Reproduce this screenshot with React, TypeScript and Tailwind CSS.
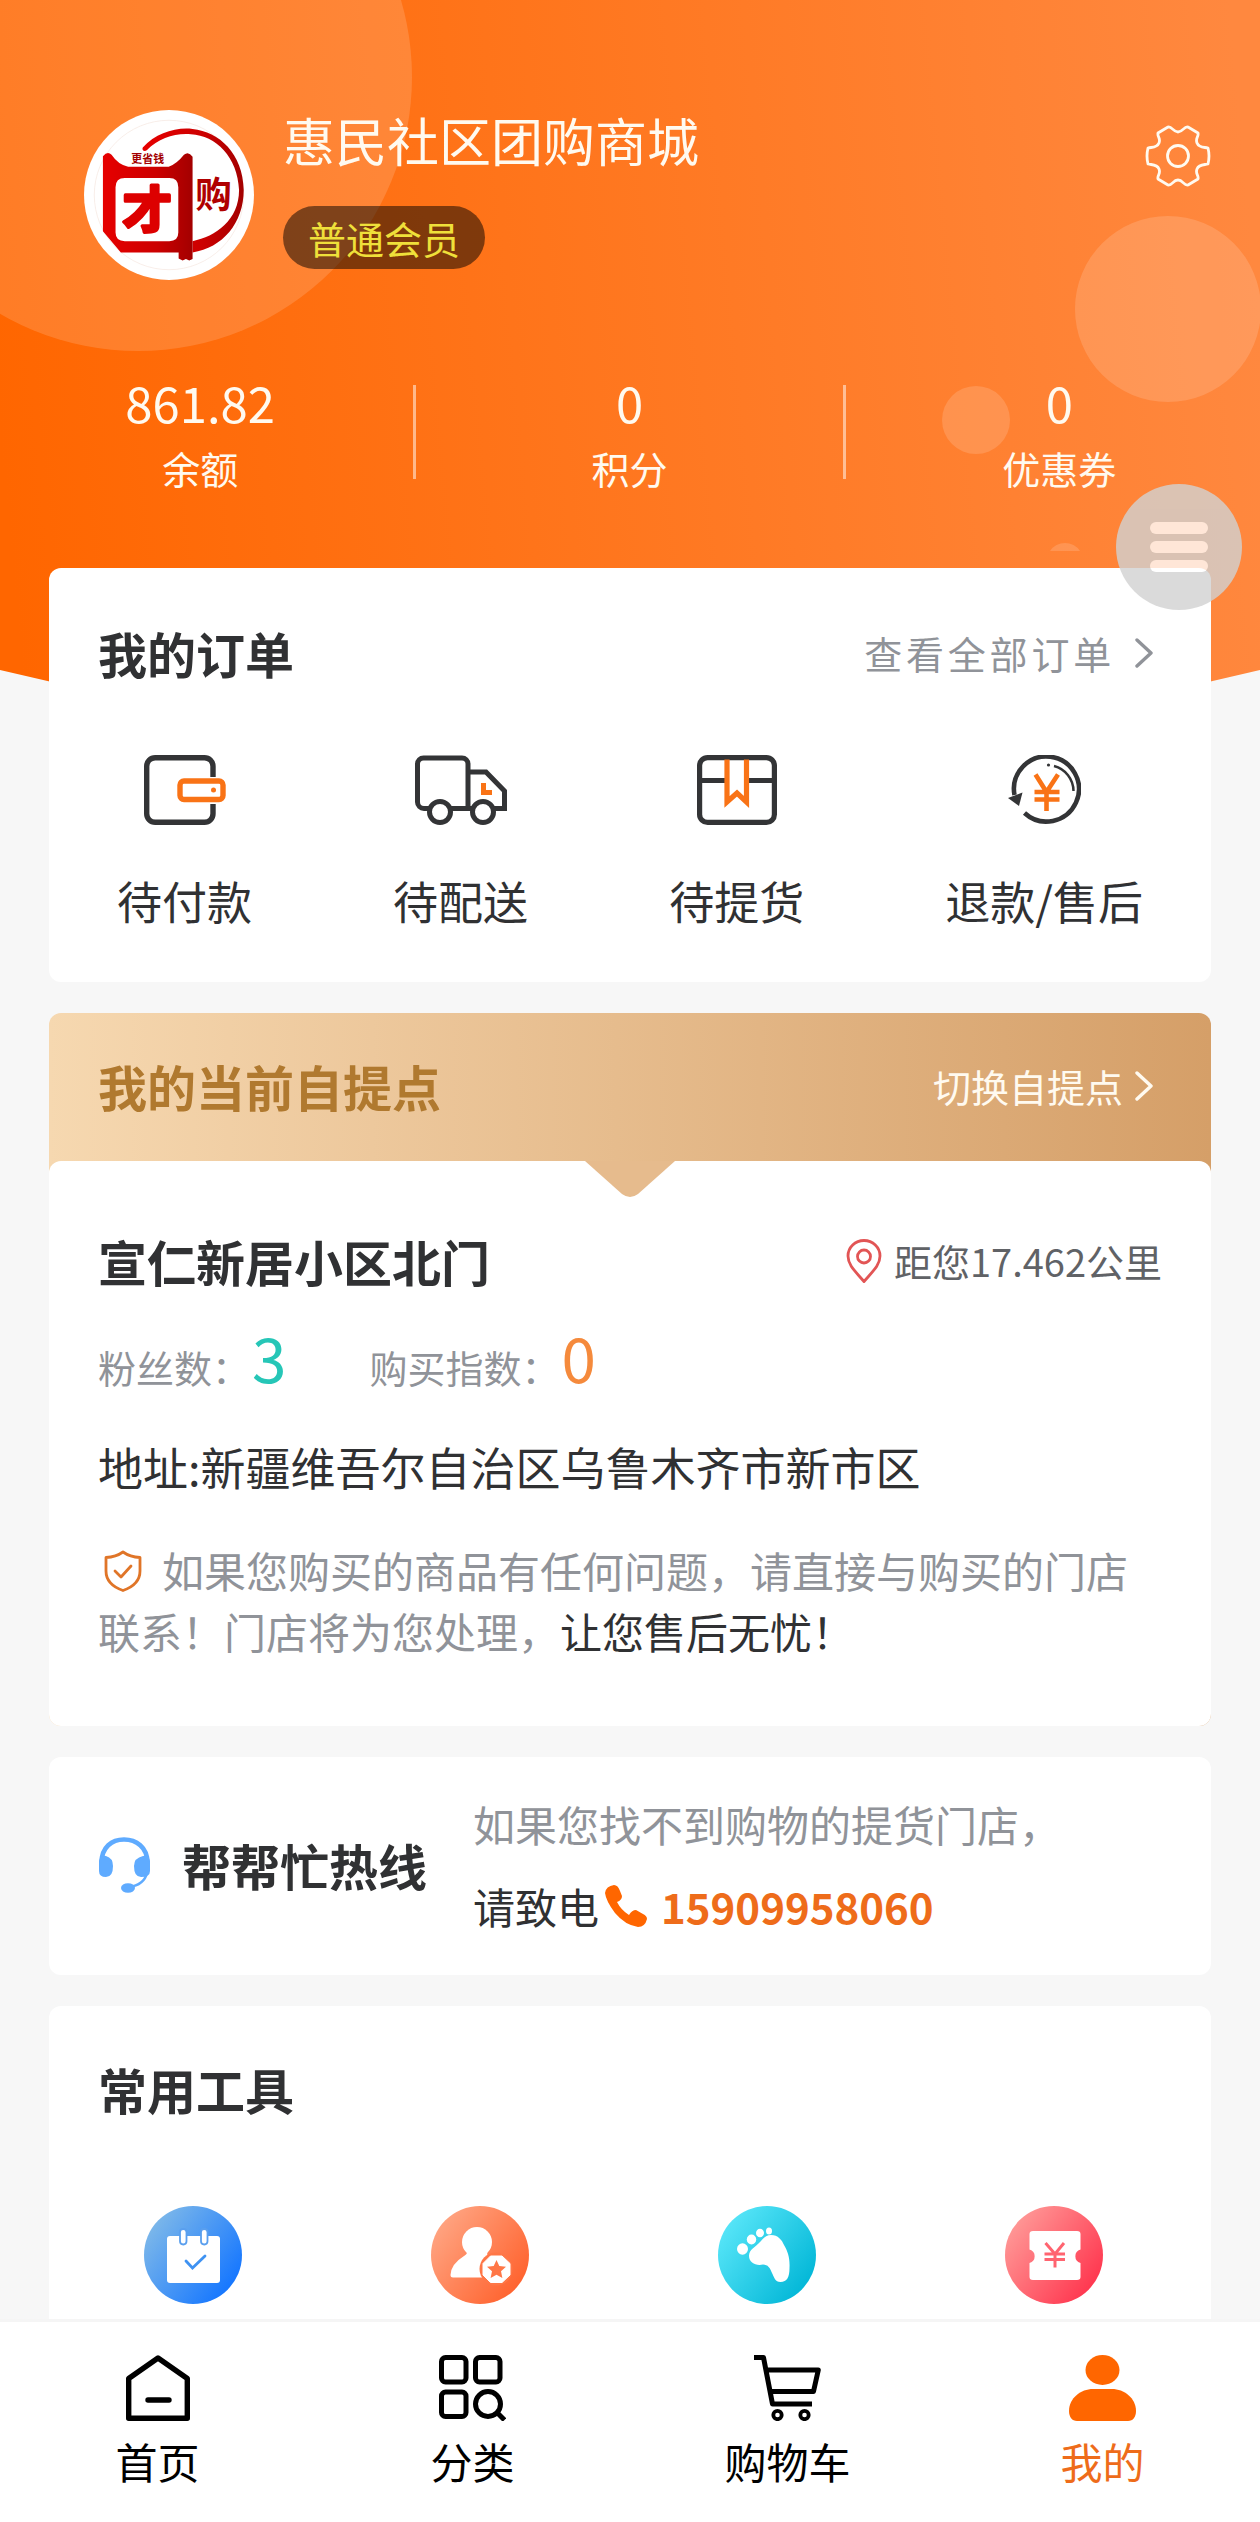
import type { ReactNode } from 'react';

const stats = [
  { value: '861.82', label: '余额' },
  { value: '0', label: '积分' },
  { value: '0', label: '优惠券' },
];

function HeaderBackground() {
  return (
    <svg
      className="absolute inset-x-0 top-0 w-full"
      viewBox="0 0 1260 750"
      aria-hidden="true"
    >
      <defs>
        <linearGradient id="headerFill" gradientUnits="userSpaceOnUse" x1="0" y1="440" x2="1260" y2="320">
          <stop offset="0" stopColor="#ff6600" />
          <stop offset="1" stopColor="#ff883f" />
        </linearGradient>
      </defs>
      <path d="M0 0H1260V670Q630 824 0 670Z" fill="url(#headerFill)" />
      <g fill="#fff" fillOpacity="0.15">
        <circle cx="138" cy="77" r="274" />
        <circle cx="1168" cy="309" r="93" />
        <circle cx="976" cy="420" r="34" />
        <path d="M1050 551a18 18 0 0 1 30 0z" />
      </g>
    </svg>
  );
}

function ShopLogo() {
  return (
    <svg className="size-[170px] shrink-0" viewBox="73 59 512 512" role="img" aria-label="团购">
      <defs>
        <linearGradient id="logoRed" x1="0" x2="1">
          <stop offset="0" stopColor="#e60000" />
          <stop offset="0.6" stopColor="#cc0000" />
          <stop offset="1" stopColor="#a30000" />
        </linearGradient>
      </defs>
      <circle cx="329" cy="315" r="256" fill="#fff" />
      <circle cx="329" cy="315" r="225" fill="none" stroke="#f5e6de" strokeWidth="2" />
      <path
        d="M250 172C290 128 350 110 400 116C480 124 552 190 554 300C554 400 490 474 400 488V454C470 440 540 390 540 300C536 200 470 136 395 132C345 128 300 144 262 180C255 186 246 180 250 172Z"
        fill="url(#logoRed)"
      />
      <path
        fillRule="evenodd"
        d="M130 198Q144 182 156 194Q176 224 206 230H328Q352 222 374 194Q388 182 400 200V508L390 512L380 508L370 512L358 506V488H184L130 424ZM196 264Q168 264 168 292V428Q168 454 196 454H330Q357 454 357 428V292Q357 264 330 264Z"
        fill="url(#logoRed)"
      />
      <g fontFamily="'Noto Sans CJK SC', sans-serif" fontWeight="700" textAnchor="middle">
        <text x="263" y="415" fontSize="150" fill="#dd0000" stroke="#dd0000" strokeWidth="10" strokeLinejoin="round">才</text>
        <text x="463" y="354" fontSize="110" fill="#b00000">购</text>
        <text x="265" y="220" fontSize="33" fill="#a30000">更省钱</text>
      </g>
    </svg>
  );
}

function GearIcon() {
  return (
    <svg className="h-[64px] w-[66px]" viewBox="-33 -32 66 64" fill="none" stroke="#fffaf0" strokeWidth="2.8" strokeLinejoin="round">
      <path d="M-10-29C-6-30-5-24 0-24S6-30 10-29L20-23C21-19 17-18 19-13C21-8 26-9 30-8Q32 0 30 8C26 9 21 8 19 13C17 18 21 19 20 23L10 29C6 30 5 24 0 24S-6 30-10 29L-20 23C-21 19-17 18-19 13C-21 8-26 9-30 8Q-32 0-30-8C-26-9-21-8-19-13C-17-18-21-19-20-23Z" />
      <circle r="10.5" />
    </svg>
  );
}

function Chevron({ className }: { className: string }) {
  return (
    <svg className={className} viewBox="0 0 18 30" fill="none" stroke="currentColor" strokeWidth="3.4" strokeLinecap="round" strokeLinejoin="round" aria-hidden="true">
      <path d="M2 2L16 15L2 28" />
    </svg>
  );
}

const orders: { label: string; icon: ReactNode }[] = [
  {
    label: '待付款',
    icon: (
      <svg className="h-[70px] w-[82px]" viewBox="0 0 82 70" fill="none" stroke="#333436" strokeWidth="5.4">
        <path d="M69 22V11.2a8.500 8.500 0 0 0-8.500-8.500H11.200A8.500 8.500 0 0 0 2.700 11.200v47.600a8.500 8.500 0 0 0 8.500 8.500h49.300a8.500 8.500 0 0 0 8.500-8.500V49" />
        <rect x="36" y="26" width="43" height="18.500" rx="4" stroke="#f97316" />
        <circle cx="69.500" cy="35" r="2.500" fill="#f97316" stroke="none" />
      </svg>
    ),
  },
  {
    label: '待配送',
    icon: (
      <svg className="h-[70px] w-[92px]" viewBox="0 0 92 70" fill="none" stroke="#333436" strokeWidth="5">
        <path d="M14.500 53.500H9A6.500 6.500 0 0 1 2.500 47V9A6 6 0 0 1 8.500 3H47a6 6 0 0 1 6 6v44.500M35.500 53.500H57.500M53 17H71L89.500 36V53.500H78.500" />
        <circle cx="25" cy="57" r="10.500" />
        <circle cx="68" cy="57" r="10.500" />
        <path d="M68.500 28V37.500H77" stroke="#f97316" />
      </svg>
    ),
  },
  {
    label: '待提货',
    icon: (
      <svg className="h-[70px] w-[80px]" viewBox="0 0 80 70" fill="none" stroke="#333436" strokeWidth="5.200">
        <rect x="2.600" y="2.600" width="74.800" height="64.800" rx="8" />
        <path d="M4 25.500H29M50 25.500H76" />
        <path d="M30 4.500V47L40 38L49.500 47V4.500" stroke="#f97316" />
      </svg>
    ),
  },
  {
    label: '退款/售后',
    icon: (
      <svg className="h-[70px] w-[73px]" viewBox="0 0 73 70" fill="none" stroke="#333436" strokeWidth="4.600">
        <path d="M16.500 58A32.500 32.500 0 1 0 6.500 40" />
        <path d="M0 43L14.500 37.500L11 51Z" fill="#333436" stroke="none" />
        <path d="M46 11A26 26 0 0 1 65.500 36" strokeWidth="2.500" />
        <circle cx="40.500" cy="10" r="1.600" fill="#333436" stroke="none" />
        <path d="M27.500 19.500L38.500 37L50 19.500M38.500 37V56M26.500 37H51.500M26.500 44.500H51.500" stroke="#f97316" />
      </svg>
    ),
  },
];

const tools: { label: string; from: string; to: string; art: ReactNode }[] = [
  {
    label: '签到',
    from: '#7ab6ea',
    to: '#1677ff',
    art: (
      <>
        <rect x="23" y="30" width="53" height="47" rx="3" fill="#fff" />
        <g fill="#fff" stroke="#5a9fee" strokeWidth="1.800">
          <rect x="36" y="23" width="6.500" height="15.500" rx="3.200" />
          <rect x="57" y="23" width="6.500" height="15.500" rx="3.200" />
        </g>
        <path d="M42 55L48.500 62L61 50" fill="none" stroke="#3f92f2" strokeWidth="2.800" strokeLinecap="round" />
      </>
    ),
  },
  {
    label: '会员',
    from: '#ffa27f',
    to: '#ff6430',
    art: (
      <>
        <circle cx="46" cy="36" r="15" fill="#fff" />
        <path d="M35 44Q38 47 33 50Q20 58 19.500 69Q19.500 71.500 22 71.500H60V52Q54 49 57 44Z" fill="#fff" />
        <circle cx="65" cy="63" r="16.500" fill="#ff7747" />
        <path d="M59.500 50H71L79 57.500V69L71 76.500H59.500L52 69V57.500Z" fill="#fff" stroke="#fff" strokeLinejoin="round" />
        <path d="M65.500 54L68.300 60L75 60.800L70 65.300L71.400 72L65.500 68.700L59.600 72L61 65.300L56 60.800L62.700 60Z" fill="#ff7747" />
      </>
    ),
  },
  {
    label: '足迹',
    from: '#55e4f7',
    to: '#04b8d8',
    art: (
      <g fill="#fff">
        <ellipse cx="24.500" cy="43" rx="5.500" ry="5.800" />
        <ellipse cx="33.500" cy="33.500" rx="4.700" ry="5" />
        <ellipse cx="42" cy="27" rx="4" ry="4.300" />
        <ellipse cx="51" cy="25" rx="3" ry="3.500" />
        <path d="M53 29C60 29 64 34 66 39C70 46 72 52 71.500 62C71.500 71 69 76 62.500 76C57 76 56 71 54 67C52 62 50 58.500 45 58.500C38 60 31 57 31 50C31 43 37 42 43 35C46 31 49 29 53 29Z" />
      </g>
    ),
  },
  {
    label: '优惠券',
    from: '#ff9594',
    to: '#ff3850',
    art: (
      <>
        <path d="M28 25H72Q75.500 25 75.500 28V43.500A7 7 0 0 0 75.500 57V71Q75.500 74 72 74H28Q24.500 74 24.500 71V57A7 7 0 0 0 24.500 43.500V28Q24.500 25 28 25Z" fill="#fff" />
        <path d="M40.500 37L50 48L59 37M50 48V61.500M39.500 48H60M39.500 53.500H60" fill="none" stroke="#ff6470" strokeWidth="3" />
      </>
    ),
  },
];

const tabs: { label: string; active?: boolean; icon: ReactNode }[] = [
  {
    label: '首页',
    icon: (
      <svg className="h-[66px] w-[64px]" viewBox="0 0 64 66" fill="none" stroke="#000" strokeWidth="5.4" strokeLinejoin="round">
        <path d="M32 3L61.300 23.500V63.200H2.700V23.500Z" />
        <path d="M22 45H43" strokeLinecap="round" />
      </svg>
    ),
  },
  {
    label: '分类',
    icon: (
      <svg className="h-[66px] w-[67px]" viewBox="0 0 67 66" fill="none" stroke="#000" strokeWidth="5">
        <rect x="2.500" y="2.500" width="24.500" height="24.500" rx="4" />
        <rect x="36.500" y="2.500" width="24.500" height="24.500" rx="4" />
        <rect x="2.500" y="37" width="24.500" height="24.500" rx="4" />
        <circle cx="49" cy="49" r="12.500" />
        <path d="M58 57.500L65.500 65" />
      </svg>
    ),
  },
  {
    label: '购物车',
    icon: (
      <svg className="h-[66px] w-[67px]" viewBox="0 0 67 66" fill="none" stroke="#000" strokeWidth="5" strokeLinejoin="round">
        <path d="M0 2.500H9.500L18.500 49H58M13 15H64.300L59.500 36.500H17" />
        <circle cx="23.500" cy="60" r="4.200" strokeWidth="3.800" />
        <circle cx="50.500" cy="60" r="4.200" strokeWidth="3.800" />
      </svg>
    ),
  },
  {
    label: '我的',
    active: true,
    icon: (
      <svg className="h-[66px] w-[67px]" viewBox="0 0 67 66" fill="#ff6600">
        <ellipse cx="33.500" cy="15" rx="17" ry="15" />
        <path d="M0 56C0 43 12 34 24 34H43C55 34 67 43 67 56C67 62 64 66 59 66H8C3 66 0 62 0 56Z" />
      </svg>
    ),
  },
];

function OrdersCard() {
  return (
    <section className="rounded-xl bg-white pt-[57px] pb-[53px]">
      <div className="flex items-center justify-between pr-[58px] pl-[49px]">
        <h2 className="text-[49px] leading-[56px] font-bold">我的订单</h2>
        <a href="#orders" className="flex items-center gap-5 text-[38px] leading-[56px] tracking-widest text-[#909399]">
          查看全部订单
          <Chevron className="h-[30px] w-[18px]" />
        </a>
      </div>
      <div className="mt-[74px] flex justify-between px-[68px]">
        {orders.map((order) => (
          <a key={order.label} href="#orders" className="flex flex-col items-center gap-12 text-[45px] leading-[56px]">
            {order.icon}
            {order.label}
          </a>
        ))}
      </div>
    </section>
  );
}

function PickupCard() {
  return (
    <section className="rounded-xl bg-linear-to-r from-[#f6d8b0] to-[#d59f68]">
      <div className="flex items-center justify-between pt-[45px] pr-[58px] pb-[47px] pl-[49px]">
        <h2 className="text-[49px] leading-[56px] font-bold text-[#b0792f]">我的当前自提点</h2>
        <a href="#pickup" className="flex items-center gap-3 text-[38px] leading-[56px] text-[#fffaf0]">
          切换自提点
          <Chevron className="h-[30px] w-[18px]" />
        </a>
      </div>
      <div className="relative rounded-xl bg-white px-[49px] pt-[72px] pb-[65px]">
        <svg className="absolute top-0 left-1/2 h-[36px] w-[90px] -translate-x-1/2" viewBox="0 0 90 36" fill="#e6bb8d" aria-hidden="true">
          <path d="M0 0H90L53 33Q45 39 37 33Z" />
        </svg>
        <div className="flex items-center justify-between">
          <h3 className="text-[49px] leading-[56px] font-bold">宣仁新居小区北门</h3>
          <p className="flex items-center gap-3 text-[38px] leading-[56px] text-[#606266]">
            <svg className="h-[44px] w-[36px]" viewBox="0 0 36 44" fill="none" stroke="#e25555" strokeWidth="2.800" aria-hidden="true">
              <path d="M18 42.500C9 32 2 26 2 17A16 15.500 0 0 1 34 17C34 26 27 32 18 42.500Z" />
              <circle cx="18" cy="17.500" r="6.500" />
            </svg>
            距您17.462公里
          </p>
        </div>
        <dl className="mt-[35px] flex gap-[83px] text-[38px] text-[#909399]">
          <div className="flex items-baseline">
            <dt className="leading-[40px]">粉丝数：</dt>
            <dd className="ml-0.5 text-[62px] leading-[64px] text-[#26c6b7]">3</dd>
          </div>
          <div className="flex items-baseline">
            <dt className="leading-[40px]">购买指数：</dt>
            <dd className="ml-0.5 text-[62px] leading-[64px] text-[#f58a3c]">0</dd>
          </div>
        </dl>
        <p className="mt-[51px] text-[45px] leading-[56px]">地址:新疆维吾尔自治区乌鲁木齐市新市区</p>
        <p className="mt-11 text-[42px] leading-[61px] text-[#909399]">
          <svg className="mr-5 ml-1.5 inline-block h-[42px] w-[38px] align-[-4px]" viewBox="0 0 38 42" fill="none" stroke="#e07528" strokeWidth="2.800" strokeLinejoin="round" aria-hidden="true">
            <path d="M19 2Q26 7 36 7.500V21C36 31 29 37 19 40.500C9 37 2 31 2 21V7.500Q12 7 19 2Z" />
            <path d="M11 21L17 27L27 16" strokeLinecap="round" />
          </svg>
          如果您购买的商品有任何问题，请直接与购买的门店联系！门店将为您处理，
          <span className="text-[#303133]">让您售后无忧！</span>
        </p>
      </div>
    </section>
  );
}

function HotlineCard() {
  return (
    <section className="flex items-center rounded-xl bg-white px-[49px] pt-[37px] pb-[39px]">
      <svg className="h-[56px] w-[54px] shrink-0" viewBox="0 0 54 56" fill="#5fabff" aria-hidden="true">
        <path d="M3.500 26C3.500 10 14 2.500 26 2.500S49.500 10 49.500 26" fill="none" stroke="#5fabff" strokeWidth="4.600" />
        <path d="M1 24Q2 18 8 19Q15 21 15 29Q15 40 8 40Q1 40 1 34ZM52 24Q51 18 45 19Q36 21 36 29Q36 40 43 40Q52 40 52 34Z" />
        <path d="M49 36Q46 48 31 50" fill="none" stroke="#5fabff" strokeWidth="2.600" />
        <ellipse cx="30" cy="51" rx="7" ry="4.800" />
      </svg>
      <h2 className="ml-[30px] shrink-0 text-[49px] leading-[56px] font-bold">帮帮忙热线</h2>
      <div className="ml-[46px] flex flex-col gap-[22px] text-[42px] leading-[60px]">
        <p className="text-[#909399]">如果您找不到购物的提货门店，</p>
        <p className="flex items-center">
          请致电
          <svg className="mr-[14px] ml-1.5 size-[42px]" viewBox="0 0 42 42" fill="#ff6600" aria-hidden="true">
            <path d="M9 0Q13 0 15 6L17 11Q17 15 12 17Q16 25 24 30Q27 25 31 25L38 29Q42 31 42 34Q40 42 33 42Q20 40 10 28Q1 16 0 8Q1 1 9 0Z" />
          </svg>
          <a href="tel:15909958060" className="font-bold text-[#ee6c1a]">15909958060</a>
        </p>
      </div>
    </section>
  );
}

function ToolsCard() {
  return (
    <section className="flex-1 rounded-t-xl bg-white pt-[55px] pb-[14px]">
      <h2 className="pl-[49px] text-[49px] leading-[56px] font-bold">常用工具</h2>
      <div className="mt-[89px] grid grid-cols-4 justify-items-center pr-3.5">
        {tools.map((tool, i) => (
          <a key={tool.label} href="#tools" aria-label={tool.label}>
            <svg className="size-[98px]" viewBox="0 0 98 98">
              <defs>
                <linearGradient id={`tool${i}`} x1="0.1" y1="0.2" x2="0.9" y2="0.8">
                  <stop offset="0" stopColor={tool.from} />
                  <stop offset="1" stopColor={tool.to} />
                </linearGradient>
              </defs>
              <circle cx="49" cy="49" r="49" fill={`url(#tool${i})`} />
              {tool.art}
            </svg>
          </a>
        ))}
      </div>
    </section>
  );
}

export default function App() {
  return (
    <div className="relative flex min-h-screen flex-col bg-[#f7f7f7] font-['Noto_Sans_CJK_SC',sans-serif] text-[#303133]">
      <HeaderBackground />

      <header className="relative overflow-hidden pt-[110px] text-[#fffaf0]">
        <div className="flex items-start pr-[49px] pl-[84px]">
          <ShopLogo />
          <div className="ml-[29px] flex-1">
            <h1 className="text-[52px] leading-[60px]">惠民社区团购商城</h1>
            <span className="mt-9 inline-block rounded-full bg-black/50 px-[25px] text-[38px] leading-[63px] text-[#efe03a]">
              普通会员
            </span>
          </div>
          <button type="button" aria-label="设置" className="mt-3.5">
            <GearIcon />
          </button>
        </div>

        <div className="-mx-3.5 mt-[98px] grid grid-cols-3">
          {stats.map((stat, i) => (
            <div key={stat.label} className="flex items-start">
              <div className="flex-1 text-center">
                <p className="text-[49px] leading-[48px]">{stat.value}</p>
                <p className="mt-3.5 text-[38px] leading-[56px]">{stat.label}</p>
              </div>
              {i < stats.length - 1 && <div className="-mx-px mt-[7px] h-[94px] w-[3px] bg-white/50" />}
            </div>
          ))}
        </div>
      </header>

      <main className="relative flex flex-1 flex-col gap-[31px] px-[49px] pt-[72px]">
        <OrdersCard />
        <PickupCard />
        <HotlineCard />
        <ToolsCard />
      </main>

      <nav className="relative grid grid-cols-4 border-t-[3px] border-[#f5f5f5] bg-white pt-[33px] pb-[37px]">
        {tabs.map((tab) => (
          <a
            key={tab.label}
            href="#tab"
            className={`flex flex-col items-center gap-4 text-[42px] leading-[48px] ${tab.active ? 'text-[#ee6c1a]' : 'text-black'}`}
          >
            {tab.icon}
            {tab.label}
          </a>
        ))}
      </nav>

      <button
        type="button"
        aria-label="菜单"
        className="absolute top-[484px] right-[18px] flex size-[126px] flex-col items-center justify-center gap-[7px] rounded-full bg-[#d2d2d2] opacity-80"
      >
        <span className="h-3 w-[58px] rounded-full bg-white" />
        <span className="h-3 w-[58px] rounded-full bg-white" />
        <span className="h-3 w-[58px] rounded-full bg-white" />
      </button>
    </div>
  );
}
